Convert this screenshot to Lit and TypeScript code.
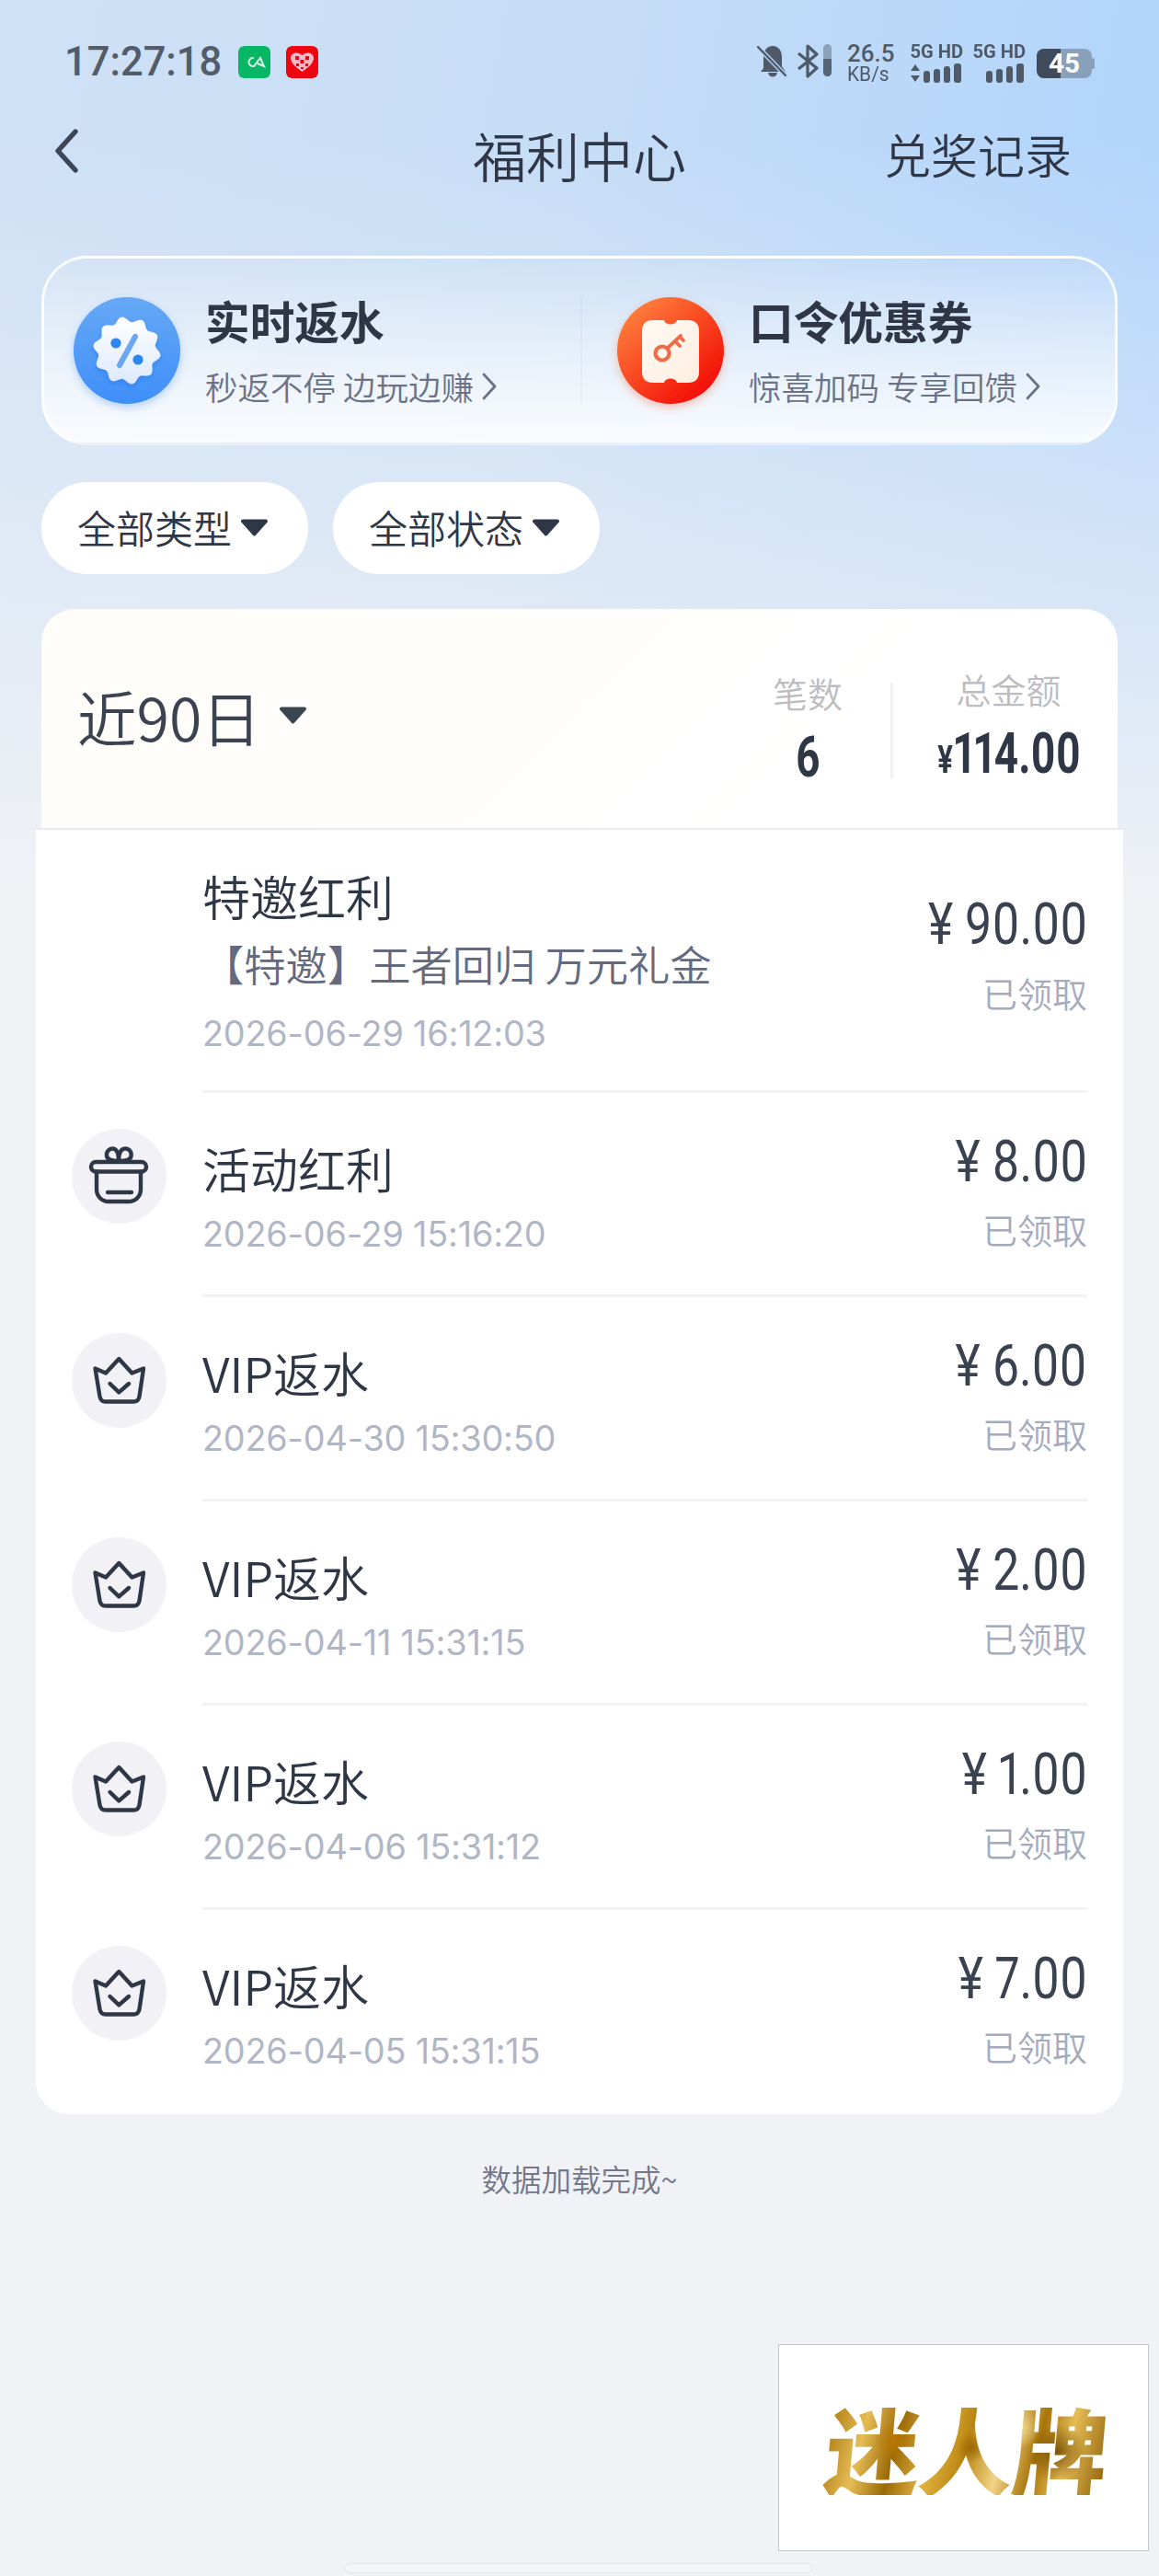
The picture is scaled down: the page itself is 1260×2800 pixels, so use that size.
import { LitElement, html, css, svg } from "lit";
import { customElement } from "lit/decorators.js";

const badgePoints = (() => {
  const pts: string[] = [];
  for (let i = 0; i < 240; i++) {
    const t = (i / 240) * Math.PI * 2;
    const r = 34 + 2.8 * Math.cos(10 * t - Math.PI / 2);
    pts.push(`${(58 + r * Math.cos(t)).toFixed(2)},${(58 + r * Math.sin(t)).toFixed(2)}`);
  }
  return pts.join(" ");
})();

const giftIcon = svg`<g fill="none" stroke="#2f3646" stroke-width="4.4" stroke-linecap="round" stroke-linejoin="round">
  <rect x="21" y="36" width="60" height="10.5" rx="5.2"/>
  <path d="M27 46.5 V66 a13 13 0 0 0 13 13 H62 a13 13 0 0 0 13 -13 V46.5"/>
  <path d="M39 69 H65"/>
  <path d="M51 35 C46 35 39 35 38 29.5 C37.2 24 42 20.8 45.5 21.6 C49.5 22.5 51 27 51 35 C51 27 53 22.5 57 21.6 C61 20.8 65.4 24 64.6 29.5 C64 35 56 35 51 35"/>
</g>`;

const crownIcon = svg`<g fill="none" stroke="#2f3646" stroke-width="4.4" stroke-linecap="round" stroke-linejoin="round">
  <path d="M25.5 38.5 L37 43.5 L51.3 28 L65.5 43.5 L78 38.5 L73.5 69 Q72.6 74.5 67 74.5 H37 Q31.4 74.5 30.5 69 Z"/>
  <path d="M41.5 55 L51.3 64.4 L62 55"/>
</g>`;

type Row = { title: string; sub?: string; date: string; amt: string; icon: "gift" | "crown" | null };

const rows: Row[] = [
  { title: "特邀红利", sub: "【特邀】王者回归 万元礼金", date: "2026-06-29 16:12:03", amt: "¥ 90.00", icon: null },
  { title: "活动红利", date: "2026-06-29 15:16:20", amt: "¥ 8.00", icon: "gift" },
  { title: "VIP返水", date: "2026-04-30 15:30:50", amt: "¥ 6.00", icon: "crown" },
  { title: "VIP返水", date: "2026-04-11 15:31:15", amt: "¥ 2.00", icon: "crown" },
  { title: "VIP返水", date: "2026-04-06 15:31:12", amt: "¥ 1.00", icon: "crown" },
  { title: "VIP返水", date: "2026-04-05 15:31:15", amt: "¥ 7.00", icon: "crown" },
];

const caret = (cls: string) => html`<svg class=${cls} viewBox="0 0 31 19"><path d="M3 2.5 H28 L15.5 16.5 Z" fill="currentColor" stroke="currentColor" stroke-width="4" stroke-linejoin="round"/></svg>`;

const chevron = html`<svg class="chev" viewBox="0 0 16 30"><path d="M2 2 L14 15 L2 28" fill="none" stroke="#6c7286" stroke-width="2.8" stroke-linecap="round" stroke-linejoin="round"/></svg>`;

@customElement("app-root")
export class AppRoot extends LitElement {
  static styles = css`
    :host { display: block; width: 1260px; font-family: "Noto Sans CJK SC", sans-serif; color: #2f3646; }
    * { box-sizing: border-box; }
    .page {
      position: relative; height: 2800px; overflow: hidden; display: flex; flex-direction: column;
      background:
        linear-gradient(to bottom, rgba(241,242,245,0) 150px, rgba(241,242,245,.55) 620px, #f1f2f5 1000px) no-repeat,
        linear-gradient(100deg, #cfe1f5 0%, #c6ddf6 45%, #add2fc 100%) no-repeat,
        #f1f2f5;
      background-size: 100% 1000px, 100% 1000px, auto;
    }
    .status { height: 110px; padding: 0 70px 0 70px; display: flex; align-items: flex-start; flex: none; }
    .time { font: 500 43.5px/1 Roboto, sans-serif; color: #535c68; margin: 46px 21px 0 0; width: 168px; white-space: nowrap; }
    .app { width: 35px; height: 35px; border-radius: 6px; margin: 50px 17px 0 0; display: block; }
    .sright { margin-left: auto; display: flex; align-items: flex-start; padding-top: 48px; color: #4f5a68; }
    .bell { width: 33px; height: 37px; margin-right: 10px; }
    .bt { width: 38px; height: 37px; margin-right: 17px; }
    .speed { width: 54px; display: flex; flex-direction: column; align-items: flex-start; margin: -2px 14px 0 0; font-family: Roboto, sans-serif; white-space: nowrap; }
    .speed b { font-weight: 500; font-size: 26px; line-height: 25px; display: block; }
    .speed span { font-size: 22px; line-height: 20px; display: block; transform: scaleX(.95); transform-origin: left; }
    .net { width: 58px; margin-right: 10px; display: flex; flex-direction: column; align-items: flex-end; }
    .net.last { margin-right: 12px; }
    .net b { font: 700 21px/17px Roboto, sans-serif; white-space: nowrap; display: block; transform: scaleX(.96); transform-origin: right; }
    .net svg { width: 58px; height: 21px; margin-top: 4px; display: block; }
    .batt { width: 63px; height: 32px; margin-top: 5px; display: block; }
    .nav { height: 110px; flex: none; position: relative; display: flex; align-items: center; justify-content: space-between; padding: 0 45px 0 58px; }
    .back { width: 28px; height: 48px; margin-top: -3px; display: block; }
    .ntitle { position: absolute; left: 0; right: 0; text-align: center; font-size: 58px; line-height: 110px; font-weight: 350; top: 3px; pointer-events: none; }
    .nlink { font-size: 51px; line-height: 110px; font-weight: 350; margin-top: 4px; margin-right: 50px; }
    .promo {
      margin: 58px 45px 0; height: 206px; border-radius: 50px; flex: none; display: flex; align-items: center;
      background: linear-gradient(180deg, rgba(255,255,255,.04) 0%, rgba(255,255,255,.5) 55%, rgba(255,255,255,.86) 100%);
      border: 3px solid rgba(255,255,255,.85); border-bottom-color: rgba(255,255,255,.4);
    }
    .pitem { display: flex; align-items: center; gap: 27px; }
    .pitem.a { width: 583px; padding-left: 32px; }
    .pitem.b { padding-left: 38px; gap: 27px; }
    .pdiv { width: 2px; height: 116px; background: rgba(120,140,170,.08); flex: none; }
    .picon { width: 116px; height: 116px; display: block; flex: none; overflow: visible; }
    .ptext { display: flex; flex-direction: column; padding-top: 2px; }
    .ptitle { font-size: 48.7px; line-height: 62px; font-weight: 700; white-space: nowrap; margin-top: -3px; }
    .psub { font-size: 35.5px; line-height: 48px; color: #6c7286; margin-top: 17px; white-space: nowrap; display: flex; align-items: center; gap: 9px; font-weight: 350; }
    .chev { width: 16px; height: 30px; display: block; }
    .filters { display: flex; gap: 27px; margin: 40px 45px 0; flex: none; }
    .pill { height: 100px; background: #fff; border-radius: 50px; display: flex; align-items: center; padding: 0 43px 4px 39px; gap: 9px; font-size: 42px; font-weight: 350; white-space: nowrap; }
    .pcaret { width: 31px; height: 19px; color: #2f3646; display: block; margin-top: 3px; }
    .hdr {
      margin: 38px 45px 0; height: 238px; border-radius: 36px 36px 0 0; flex: none; display: flex; align-items: center;
      justify-content: space-between; padding: 0 5px 0 39px; background: linear-gradient(135deg, #fffdf9 0%, #fffefc 40%, #ffffff 70%);
    }
    .period { display: flex; align-items: center; font-size: 64.5px; font-weight: 350; color: #3c4350; margin-top: -6px; gap: 19px; }
    .period .pcaret { width: 31px; height: 19px; color: #3c4650; margin-top: -2px; }
    .stats { display: flex; align-items: center; margin-top: 16px; }
    .stat { display: flex; flex-direction: column; align-items: center; }
    .stat.n { width: 180px; }
    .stat.t { width: 227px; margin-left: 12px; }
    .stat small { font-size: 38px; line-height: 56px; color: #bcbdc0; font-weight: 350; }
    .stat .val { font: 700 62px/62px Roboto, sans-serif; font-variant-numeric: proportional-nums; color: #2f3646; display: inline-block; transform: scaleX(.74); white-space: nowrap; margin-top: 11px; }
    .stat .val i { font-style: normal; font-size: 42px; margin-right: 1px; }
    .stat.t .val { width: 210px; text-align: center; }
    .vline { width: 3px; height: 104px; background: #f1f1f3; flex: none; margin-top: 10px; }
    .list {
      margin: 0 39px; height: 1398px; flex: none; background: #fff; border-radius: 0 0 36px 36px; border-top: 2px solid #e9ebf0;
      display: grid; grid-template-rows: 286px repeat(5, 1fr);
    }
    .row { display: flex; padding-left: 39px; min-height: 0; }
    .slot { width: 103px; flex: none; margin-right: 39px; padding-top: 39px; }
    .circle { width: 103px; height: 103px; display: block; }
    .body { flex: 1; margin-right: 39px; display: flex; justify-content: space-between; border-bottom: 3px solid #f1f2f5; }
    .row:last-child .body { border-bottom: none; }
    .left { padding-top: 47px; }
    .right { padding-top: 40px; display: flex; flex-direction: column; align-items: flex-end; }
    .rtitle { font-size: 52px; line-height: 70px; font-weight: 350; white-space: nowrap; }
    .rsub { font-size: 45.3px; line-height: 60px; color: #636a80; margin-top: 8px; font-weight: 350; white-space: nowrap; }
    .rdate { font: 400 37.8px/56px Inter, sans-serif; color: #b0b6c6; margin-top: 8px; white-space: nowrap; letter-spacing: -.2px; }
    .row.first .left { padding-top: 37px; }
    .row.first .rdate { margin-top: 18px; }
    .row.first .right { padding-top: 68px; }
    .row.first .st { margin-top: 11px; }
    .amt { font: 400 63px/70px Roboto, sans-serif; font-variant-numeric: proportional-nums; color: #3a4150; display: inline-block; transform: scaleX(.82); transform-origin: right; white-space: nowrap; }
    .st { font-size: 38px; line-height: 56px; color: #a5abbd; margin-top: 10px; font-weight: 350; white-space: nowrap; }
    .done { text-align: center; font-size: 32.5px; line-height: 46px; color: #717688; margin-top: 47px; font-weight: 350; }
    .wm {
      position: absolute; left: 846px; top: 2548px; width: 403px; height: 225px; background: #fff; border: 1px solid #c4c6cc;
      display: flex; align-items: center; justify-content: center;
    }
    .gold {
      font-size: 103px; line-height: 1; font-weight: 900; letter-spacing: -1px; white-space: nowrap; color: transparent;
      background:
        radial-gradient(circle at 24% 42%, rgba(190,120,0,.85) 0, rgba(190,120,0,0) 9%),
        radial-gradient(circle at 52% 50%, rgba(150,95,0,.8) 0, rgba(150,95,0,0) 10%),
        radial-gradient(circle at 82% 55%, rgba(110,70,0,.85) 0, rgba(110,70,0,0) 12%),
        radial-gradient(circle at 68% 30%, rgba(245,225,150,.9) 0, rgba(245,225,150,0) 10%),
        linear-gradient(100deg, #a8760c 0%, #e6bd55 14%, #9b6a08 26%, #e2b441 38%, #b98510 50%, #f0d486 62%, #a87408 74%, #e4bb55 84%, #8f6108 100%);
      -webkit-background-clip: text; background-clip: text; transform: skewX(-5deg); margin-left: 6px;
    }
    .home { position: absolute; left: 375px; top: 2786px; width: 508px; height: 11px; border-radius: 6px; background: #f4f5f7; border: 1px solid #e3e4e9; }
  `;

  private netIcon(arrows: boolean) {
    return html`<svg viewBox="0 0 58 21">
      ${arrows ? svg`<path d="M1 8 L6 1 L11 8 Z M1 13 L11 13 L6 20 Z" fill="#4f5a68"/>` : null}
      <rect x="15" y="8" width="7" height="13" rx="3" fill="#4f5a68"/>
      <rect x="26" y="6" width="7" height="15" rx="3" fill="#4f5a68"/>
      <rect x="37" y="3" width="7" height="18" rx="3" fill="#4f5a68"/>
      <rect x="48" y="0" width="8" height="21" rx="3" fill="#4f5a68"/>
    </svg>`;
  }

  render() {
    return html`<div class="page">
      <div class="status">
        <div class="time">17:27:18</div>
        <svg class="app" viewBox="0 0 35 35"><rect width="35" height="35" rx="6" fill="#08b765"/><path d="M17 13 A4.6 4.6 0 1 0 17 22 L24 13 L28 22 L21 19" fill="none" stroke="#d8f7e6" stroke-width="2"/></svg>
        <svg class="app" viewBox="0 0 35 35"><rect width="35" height="35" rx="6" fill="#ee0512"/><path d="M17.5 28 C9 22 5 18 5 13 C5 8 12 5 17.5 10 C23 5 30 8 30 13 C30 18 26 22 17.5 28 Z" fill="#f9b9c4"/><path d="M10 11 h4 v4 h-4 Z M21 11 h4 v4 h-4 Z M15.5 15 h4 v4 h-4 Z M11 19 h3 v3 h-3 Z M21 19 h3 v3 h-3 Z M16 23 h3 v2 h-3 Z" fill="#ee0512"/></svg>
        <div class="sright">
          <svg class="bell" viewBox="0 0 33 37"><path d="M17 2 C24 2 27 8 27 14 V24 L31 30 H4 L7 26 V14 C7 8 10 2 17 2 Z M12 31 H22 C21 37 13 37 12 31 Z" fill="#4f5a68"/><path d="M1 3 L31 34" stroke="#b5d4f8" stroke-width="5"/><path d="M1 3 L31 34" stroke="#4f5a68" stroke-width="2.4" stroke-linecap="round"/></svg>
          <svg class="bt" viewBox="0 0 38 37"><path d="M2 10 L22 26 L12 35 V2 L22 11 L2 27" fill="none" stroke="#4f5a68" stroke-width="3.2" stroke-linejoin="round"/><rect x="29" y="0" width="9" height="35" rx="4.5" fill="#8ba2b9"/><path d="M29 16 H38 V30.500 A4.500 4.500 0 0 1 29 30.500 Z" fill="#566576"/></svg>
          <div class="speed"><b>26.5</b><span>KB/s</span></div>
          <div class="net"><b>5G HD</b>${this.netIcon(true)}</div>
          <div class="net last"><b>5G HD</b>${this.netIcon(false)}</div>
          <svg class="batt" viewBox="0 0 63 32"><rect x="0" y="0" width="60" height="32" rx="8" fill="#88a0ba"/><path d="M8 0 H26 V32 H8 A8 8 0 0 1 0 24 V8 A8 8 0 0 1 8 0 Z" fill="#3f4a5a"/><rect x="59" y="10" width="4" height="12" rx="2" fill="#88a0ba"/><text x="30" y="26" text-anchor="middle" font-family="Roboto, sans-serif" font-weight="700" font-size="29" fill="#fff" textLength="34" lengthAdjust="spacingAndGlyphs">45</text></svg>
        </div>
      </div>

      <div class="nav">
        <svg class="back" viewBox="0 0 28 48"><path d="M24 3 L5 24 L24 45" fill="none" stroke="#3c4656" stroke-width="5.4" stroke-linecap="round" stroke-linejoin="round"/></svg>
        <div class="ntitle">福利中心</div>
        <div class="nlink">兑奖记录</div>
      </div>

      <div class="promo">
        <div class="pitem a">
          <svg class="picon" viewBox="0 0 116 116">
            <defs>
              <linearGradient id="bb" x1="0" y1="0" x2="0" y2="1"><stop offset="0" stop-color="#66a8f6"/><stop offset="1" stop-color="#3f8ff9"/></linearGradient>
              <linearGradient id="bw" x1="0" y1="0" x2="0" y2="1"><stop offset="0" stop-color="#ffffff"/><stop offset="1" stop-color="#dce9fc"/></linearGradient>
              <filter id="sb" x="-30%" y="-30%" width="160%" height="160%"><feDropShadow dx="0" dy="4" stdDeviation="5" flood-color="#3f8ff9" flood-opacity=".35"/></filter>
              <filter id="sd" x="-30%" y="-30%" width="160%" height="160%"><feDropShadow dx="0" dy="3" stdDeviation="2.500" flood-color="#1d6fe0" flood-opacity=".4"/></filter>
            </defs>
            <circle cx="58" cy="58" r="58" fill="url(#bb)" filter="url(#sb)"/>
            <polygon points=${badgePoints} fill="url(#bw)" filter="url(#sd)"/>
            <circle cx="46" cy="50" r="5.6" fill="#2d86f2"/>
            <circle cx="70" cy="68" r="5.6" fill="#2d86f2"/>
            <path d="M67 43 L50 74" stroke="#6aa7f0" stroke-width="6" stroke-linecap="round"/>
          </svg>
          <div class="ptext"><div class="ptitle">实时返水</div><div class="psub"><span>秒返不停 边玩边赚</span>${chevron}</div></div>
        </div>
        <div class="pdiv"></div>
        <div class="pitem b">
          <svg class="picon" viewBox="0 0 116 116">
            <defs>
              <linearGradient id="rb" x1="0.15" y1="0.1" x2="0.85" y2="0.9"><stop offset="0" stop-color="#ff7d3c"/><stop offset="1" stop-color="#f20c04"/></linearGradient>
              <linearGradient id="tk" x1="0" y1="0" x2="1" y2="1"><stop offset="0" stop-color="#fffaf4"/><stop offset="1" stop-color="#ffeee0"/></linearGradient>
              <filter id="sr" x="-30%" y="-30%" width="160%" height="160%"><feDropShadow dx="0" dy="4" stdDeviation="5" flood-color="#f0401a" flood-opacity=".3"/></filter>
            </defs>
            <circle cx="58" cy="58" r="58" fill="url(#rb)" filter="url(#sr)"/>
            <path d="M39 25 H51 C52 31 64 31 65 25 H77 Q89 25 89 37 V81 Q89 93 77 93 H65 C64 87 52 87 51 93 H39 Q27 93 27 81 V37 Q27 25 39 25 Z" fill="url(#tk)"/>
            <circle cx="49" cy="61" r="7.5" fill="none" stroke="#ef6c48" stroke-width="4.2"/>
            <path d="M55 55 L69 42 M63 48 L68 53 M68 43 L72 47" fill="none" stroke="#ef6c48" stroke-width="3.800" stroke-linecap="round"/>
          </svg>
          <div class="ptext"><div class="ptitle">口令优惠券</div><div class="psub"><span>惊喜加码 专享回馈</span>${chevron}</div></div>
        </div>
      </div>

      <div class="filters">
        <div class="pill">全部类型${caret("pcaret")}</div>
        <div class="pill">全部状态${caret("pcaret")}</div>
      </div>

      <div class="hdr">
        <div class="period"><span>近90日</span>${caret("pcaret")}</div>
        <div class="stats">
          <div class="stat n"><small>笔数</small><span class="val">6</span></div>
          <div class="vline"></div>
          <div class="stat t"><small>总金额</small><span class="val"><i>¥</i>114.00</span></div>
        </div>
      </div>

      <div class="list">
        ${rows.map(
          (r, i) => html`<div class="row ${i === 0 ? "first" : ""}">
            <div class="slot">
              ${r.icon
                ? html`<svg class="circle" viewBox="0 0 103 103"><circle cx="51.500" cy="51.500" r="51.500" fill="#f1f1f6"/>${r.icon === "gift" ? giftIcon : crownIcon}</svg>`
                : null}
            </div>
            <div class="body">
              <div class="left">
                <div class="rtitle">${r.title}</div>
                ${r.sub ? html`<div class="rsub">${r.sub}</div>` : null}
                <div class="rdate">${r.date}</div>
              </div>
              <div class="right">
                <span class="amt">${r.amt}</span>
                <div class="st">已领取</div>
              </div>
            </div>
          </div>`
        )}
      </div>

      <div class="done">数据加载完成~</div>

      <div class="wm"><span class="gold">迷人牌</span></div>
      <div class="home"></div>
    </div>`;
  }
}
